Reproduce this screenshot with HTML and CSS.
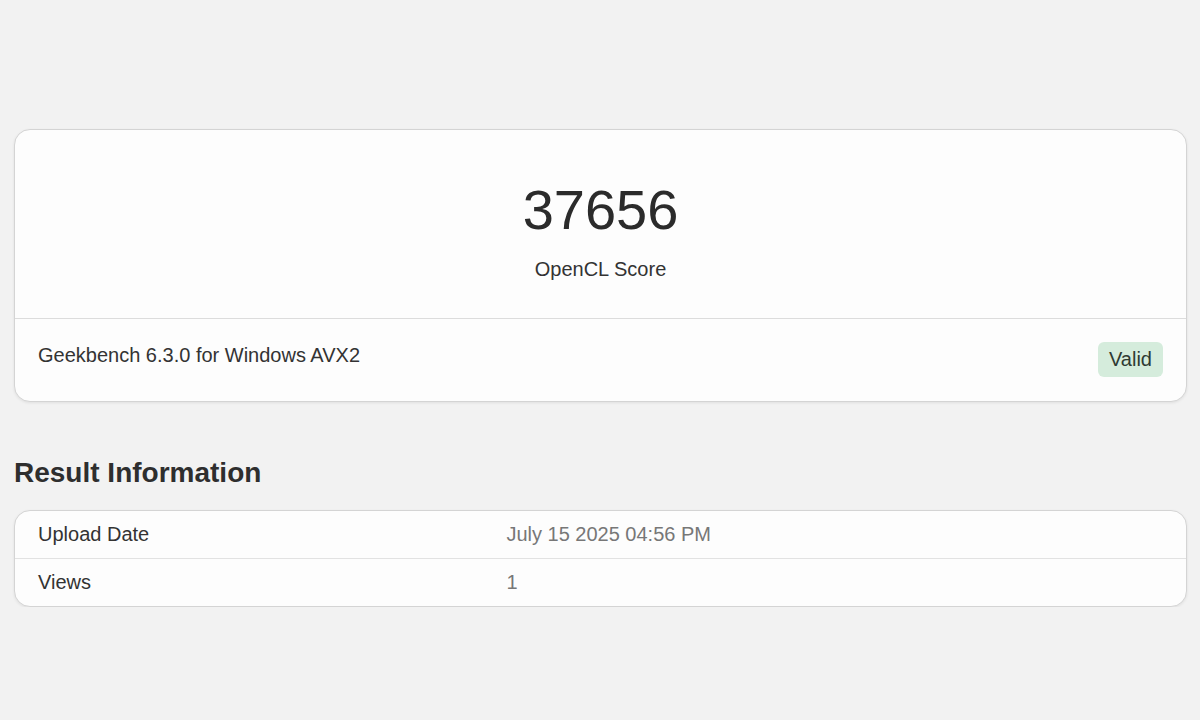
FILE: index.html
```html
<!DOCTYPE html>
<html lang="en">
<head>
    <meta charset="UTF-8">
    <title>Geekbench Result</title>
    <link rel="stylesheet" href="styles.css">
</head>
<body>
<div id="page">
    <div class="card score-card">
        <div class="score-top">
            <div class="score">37656</div>
            <div class="score-label">OpenCL Score</div>
        </div>
        <div class="score-foot">
            <span class="version">Geekbench 6.3.0 for Windows AVX2</span>
            <span class="badge">Valid</span>
        </div>
    </div>

    <h2 class="section-title">Result Information</h2>

    <div class="card info-table">
        <div class="info-row">
            <div class="info-name">Upload Date</div>
            <div class="info-value">July 15 2025 04:56 PM</div>
        </div>
        <div class="info-row">
            <div class="info-name">Views</div>
            <div class="info-value">1</div>
        </div>
    </div>
</div>
</body>
</html>
```

FILE: styles.css
```css
*{
    margin: 0;
    padding: 0;
    box-sizing: border-box;
}
body{
    background-color: #f2f2f2;
    font-family: "Liberation Sans", Arial, sans-serif;
    color: #333;
}
#page{
    padding: 129px 13px 0 14px;
}
.card{
    background-color: #fdfdfd;
    border: 1px solid #d4d4d4;
    border-radius: 16px;
    box-shadow: 0 1px 3px rgba(0, 0, 0, 0.08);
}
.score-top{
    text-align: center;
    padding: 46px 0 34px;
    border-bottom: 1px solid #dcdcdc;
}
.score{
    font-size: 56px;
    line-height: 67px;
    color: #2b2b2b;
}
.score-label{
    font-size: 20px;
    line-height: 30px;
    margin-top: 11px;
}
.score-foot{
    display: flex;
    justify-content: space-between;
    align-items: flex-start;
    padding: 23px 23px 24px 23px;
}
.version{
    font-size: 20px;
    line-height: 27px;
}
.badge{
    font-size: 20px;
    line-height: 25px;
    padding: 5px 11px;
    background-color: #d5ecdc;
    border-radius: 6px;
    color: #2f3a33;
}
.section-title{
    font-size: 28px;
    line-height: 34px;
    font-weight: bold;
    color: #2e2e2e;
    margin: 54px 0 20px;
}
.info-row{
    display: grid;
    grid-template-columns: 40% 1fr;
}
.info-row + .info-row{
    border-top: 1px solid #e2e2e2;
}
.info-name, .info-value{
    font-size: 20px;
    line-height: 24px;
    padding: 11px 23px 12px;
}
.info-value{
    color: #777;
}
```
